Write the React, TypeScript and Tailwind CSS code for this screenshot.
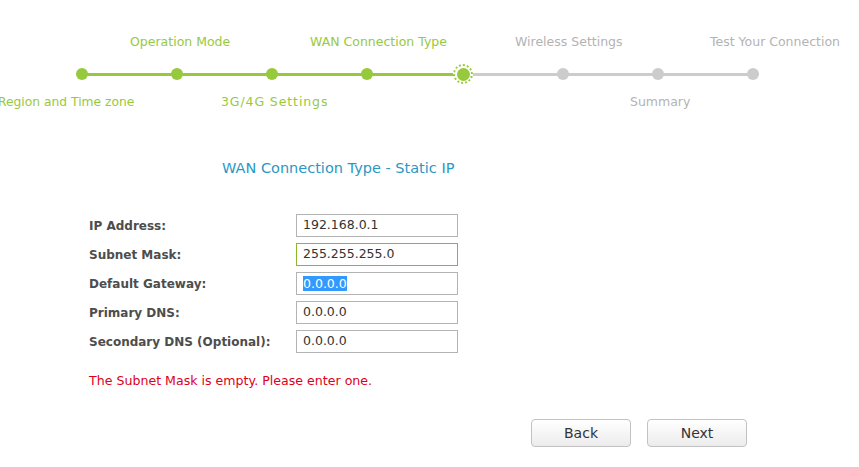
import React from "react";

// step dots, x centers measured along the track
const DOTS = [82, 177, 272, 367, 463, 563, 658, 753];
const CURRENT = 4;

const LABELS = [
  { text: "Region and Time zone", left: -2, top: 94, done: true, cls: "text-[12.3px]" },
  { text: "Operation Mode", left: 130, top: 34, done: true, cls: "text-[12.5px]" },
  { text: "3G/4G Settings", left: 221, top: 94, done: true, cls: "text-[12.5px] tracking-[0.9px]" },
  { text: "WAN Connection Type", left: 310, top: 34, done: true, cls: "text-[12.5px]" },
  { text: "Wireless Settings", left: 515, top: 34, done: false, cls: "text-[12.5px]" },
  { text: "Summary", left: 630, top: 94, done: false, cls: "text-[12.5px]" },
  { text: "Test Your Connection", left: 710, top: 34, done: false, cls: "text-[12.5px]" },
];

const FIELDS = [
  { label: "IP Address:", value: "192.168.0.1" },
  { label: "Subnet Mask:", value: "255.255.255.0", focused: true },
  { label: "Default Gateway:", value: "0.0.0.0", selected: true },
  { label: "Primary DNS:", value: "0.0.0.0" },
  { label: "Secondary DNS (Optional):", value: "0.0.0.0" },
];

function Stepper() {
  return (
    <div className="relative h-[120px] w-full overflow-hidden">
      {/* track */}
      <div className="absolute left-[82px] top-[68px] flex h-3 w-[671px] items-center">
        {DOTS.slice(1).map((x, i) => (
          <div
            key={x}
            className={`h-[3px] flex-1 ${i < CURRENT ? "bg-[#97c93c]" : "bg-[#cccccc]"}`}
          />
        ))}
      </div>
      {DOTS.map((x, i) =>
        i === CURRENT ? (
          <div
            key={x}
            style={{ left: x - 10, top: 64 }}
            className="absolute flex h-5 w-5 items-center justify-center rounded-full border-2 border-dotted border-[#97c93c] bg-white"
          >
            <div className="h-[13px] w-[13px] rounded-full bg-[#97c93c]" />
          </div>
        ) : (
          <div
            key={x}
            style={{ left: x - 6, top: 68 }}
            className={`absolute h-3 w-3 rounded-full ${i < CURRENT ? "bg-[#97c93c]" : "bg-[#cccccc]"}`}
          />
        )
      )}
      {LABELS.map((l) => (
        <div
          key={l.text}
          style={{ left: l.left, top: l.top }}
          className={`absolute whitespace-nowrap leading-4 ${l.cls} ${l.done ? "text-[#97c93c]" : "text-[#b3b3b3]"}`}
        >
          {l.text}
        </div>
      ))}
    </div>
  );
}

export default function App() {
  return (
    <div
      className="h-[467px] w-[859px] overflow-hidden bg-white"
      style={{ fontFamily: '"DejaVu Sans", Verdana, sans-serif' }}
    >
      <Stepper />

      <h2 className="pl-[222px] pt-[38px] text-[14.5px] leading-5 text-[#2a98c5]">
        WAN Connection Type - Static IP
      </h2>

      <div className="mt-[36px] flex flex-col gap-[6px] pl-[89px]">
        {FIELDS.map((f) => (
          <div key={f.label} className="flex h-[23px] items-center">
            <span className="w-[207px] text-[12px] font-bold text-[#4d4d4d]">{f.label}</span>
            <div
              className={`flex h-[23px] w-[162px] items-center border px-[6px] text-[12.5px] text-[#333] ${
                f.focused ? "border-[#8ab82a]" : "border-[#b3b3b3]"
              }`}
            >
              {f.selected ? (
                <span className="bg-[#3399ff] leading-[15px] text-white">{f.value}</span>
              ) : (
                f.value
              )}
            </div>
          </div>
        ))}
      </div>

      <p className="mt-[20px] pl-[89px] text-[12.6px] leading-4 text-[#e0001b]">
        The Subnet Mask is empty. Please enter one.
      </p>

      <div className="mt-[30px] flex gap-4 pl-[531px]">
        {["Back", "Next"].map((b) => (
          <button
            key={b}
            className="h-[28px] w-[100px] rounded-[4px] border border-[#c2c2c2] bg-gradient-to-b from-white to-[#ececec] text-[14px] text-[#333]"
          >
            {b}
          </button>
        ))}
      </div>
    </div>
  );
}
